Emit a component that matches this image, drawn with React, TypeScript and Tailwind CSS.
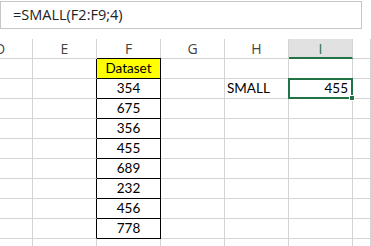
const cols = [
  { key: 'D', w: 'w-[33px]' },
  { key: 'E', w: 'w-[64px]' },
  { key: 'F', w: 'w-[64px]' },
  { key: 'G', w: 'w-[64px]' },
  { key: 'H', w: 'w-[64px]' },
  { key: 'I', w: 'w-[64px]' },
  { key: 'J', w: 'flex-1' },
];

const dataset = ['354', '675', '356', '455', '689', '232', '456', '778'];

export default function App() {
  const rows = ['Dataset', ...dataset, ''];

  return (
    <div className="w-[371px] h-[246px] overflow-hidden bg-white font-['Open_Sans',sans-serif]">
      {/* formula bar */}
      <div className="h-[39px] pt-px">
        <div className="w-[362px] h-[28px] border border-[#c6c6c6] flex items-center pl-[12px] text-[14.5px] text-[#222]">
          =SMALL(F2:F9;4)
        </div>
      </div>

      {/* column headers */}
      <div className="flex h-[20px]">
        {cols.map((c) => (
          <div
            key={c.key}
            className={`${c.w} shrink-0 flex items-center justify-center text-[14px] border-r border-b ${
              c.key === 'I'
                ? 'bg-[#e1e1e1] text-[#217346] border-r-[#d4d4d4] border-b-2 border-b-[#217346]'
                : 'text-[#444] border-[#d4d4d4]'
            } ${c.key === 'D' ? 'justify-start -indent-[5px]' : ''}`}
          >
            {c.key === 'D' ? 'D' : c.key === 'J' ? '' : c.key}
          </div>
        ))}
      </div>

      {/* rows */}
      {rows.map((val, r) => {
        const inData = r < 9;
        return (
          <div key={r} className="flex h-[20px] text-[13.5px] font-['Lato',sans-serif] text-black">
            {cols.map((c) => {
              let cls = 'border-r border-b border-[#d4d4d4]';
              let content: React.ReactNode = null;
              if (c.key === 'E' && inData) cls = 'border-r border-b border-[#d4d4d4] border-r-black';
              if (c.key === 'F' && inData) {
                cls = `border-r border-b border-black flex items-center justify-center ${r === 0 ? 'bg-[#ffff00]' : ''}`;
                content = val;
              }
              if (c.key === 'F' && r === 0) cls += ' border-t border-t-black -mt-px h-[21px]';
              if (c.key === 'H' && r === 1) {
                cls += ' flex items-center pl-[2px]';
                content = 'SMALL';
              }
              if (c.key === 'I' && r === 1) {
                cls += ' relative flex items-center justify-end pr-[4px]';
                content = (
                  <>
                    455
                    <span className="absolute -left-px -top-px -right-px -bottom-px border-2 border-[#217346]" />
                    <span className="absolute right-[-3px] bottom-[-3px] w-[6px] h-[6px] bg-[#217346] border border-white" />
                  </>
                );
              }
              return (
                <div key={c.key} className={`${c.w} shrink-0 ${cls}`}>
                  {content}
                </div>
              );
            })}
          </div>
        );
      })}
    </div>
  );
}
